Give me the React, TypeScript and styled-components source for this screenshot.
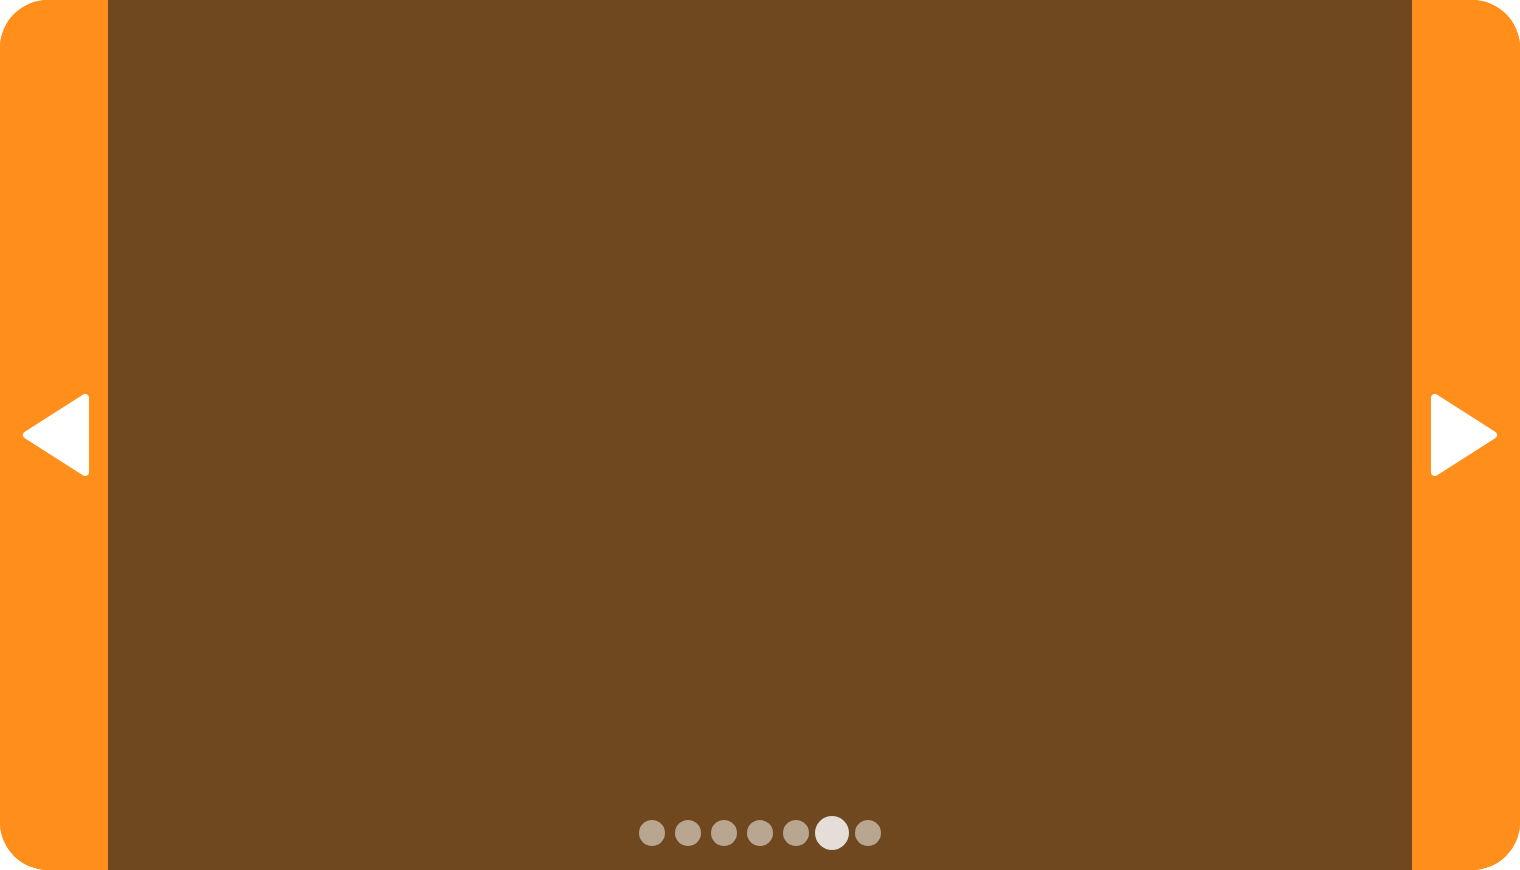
import React from "react";
import styled, { createGlobalStyle } from "styled-components";

const Global = createGlobalStyle`
  html, body { margin: 0; padding: 0; background: #ffffff; }
  body { font-family: "Liberation Sans", Arial, sans-serif; }
`;

const Frame = styled.div`
  width: 1520px;
  height: 870px;
  border-radius: 48px;
  overflow: hidden;
  display: grid;
  grid-template-columns: 108px 1fr 108px;
  background: #ff8f1a;
`;

const Side = styled.button<{ $dir: "left" | "right" }>`
  border: 0;
  padding: 0;
  margin: 0;
  background: #ff8f1a;
  display: flex;
  align-items: center;
  justify-content: ${(p) => (p.$dir === "left" ? "flex-start" : "flex-end")};
  padding-left: ${(p) => (p.$dir === "left" ? "19px" : "0")};
  padding-right: ${(p) => (p.$dir === "right" ? "19px" : "0")};
  cursor: pointer;
`;

const Slide = styled.div`
  position: relative;
  background: #6f4820;
`;

const Dots = styled.div`
  position: absolute;
  left: 0;
  right: 0;
  bottom: 20px;
  display: flex;
  justify-content: center;
`;

const DotSlot = styled.div`
  width: 36px;
  height: 34px;
  display: flex;
  align-items: center;
  justify-content: center;
`;

const Dot = styled.span<{ $active?: boolean }>`
  display: block;
  width: ${(p) => (p.$active ? "34px" : "26px")};
  height: ${(p) => (p.$active ? "34px" : "26px")};
  border-radius: 50%;
  background: ${(p) => (p.$active ? "#e4ddd8" : "#b8a690")};
`;

const Arrow = ({ dir }: { dir: "left" | "right" }) => (
  <svg width="74" height="90" viewBox="0 0 74 90" aria-hidden>
    {dir === "left" ? (
      <polygon
        points="66,8 66,82 8,45"
        fill="#ffffff"
        stroke="#ffffff"
        strokeWidth="8"
        strokeLinejoin="round"
      />
    ) : (
      <polygon
        points="8,8 8,82 66,45"
        fill="#ffffff"
        stroke="#ffffff"
        strokeWidth="8"
        strokeLinejoin="round"
      />
    )}
  </svg>
);

export default function App() {
  const count = 7;
  const active = 5;
  return (
    <>
      <Global />
      <Frame>
        <Side $dir="left" aria-label="Previous">
          <Arrow dir="left" />
        </Side>
        <Slide>
          <Dots>
            {Array.from({ length: count }).map((_, i) => (
              <DotSlot key={i}>
                <Dot $active={i === active} />
              </DotSlot>
            ))}
          </Dots>
        </Slide>
        <Side $dir="right" aria-label="Next">
          <Arrow dir="right" />
        </Side>
      </Frame>
    </>
  );
}
